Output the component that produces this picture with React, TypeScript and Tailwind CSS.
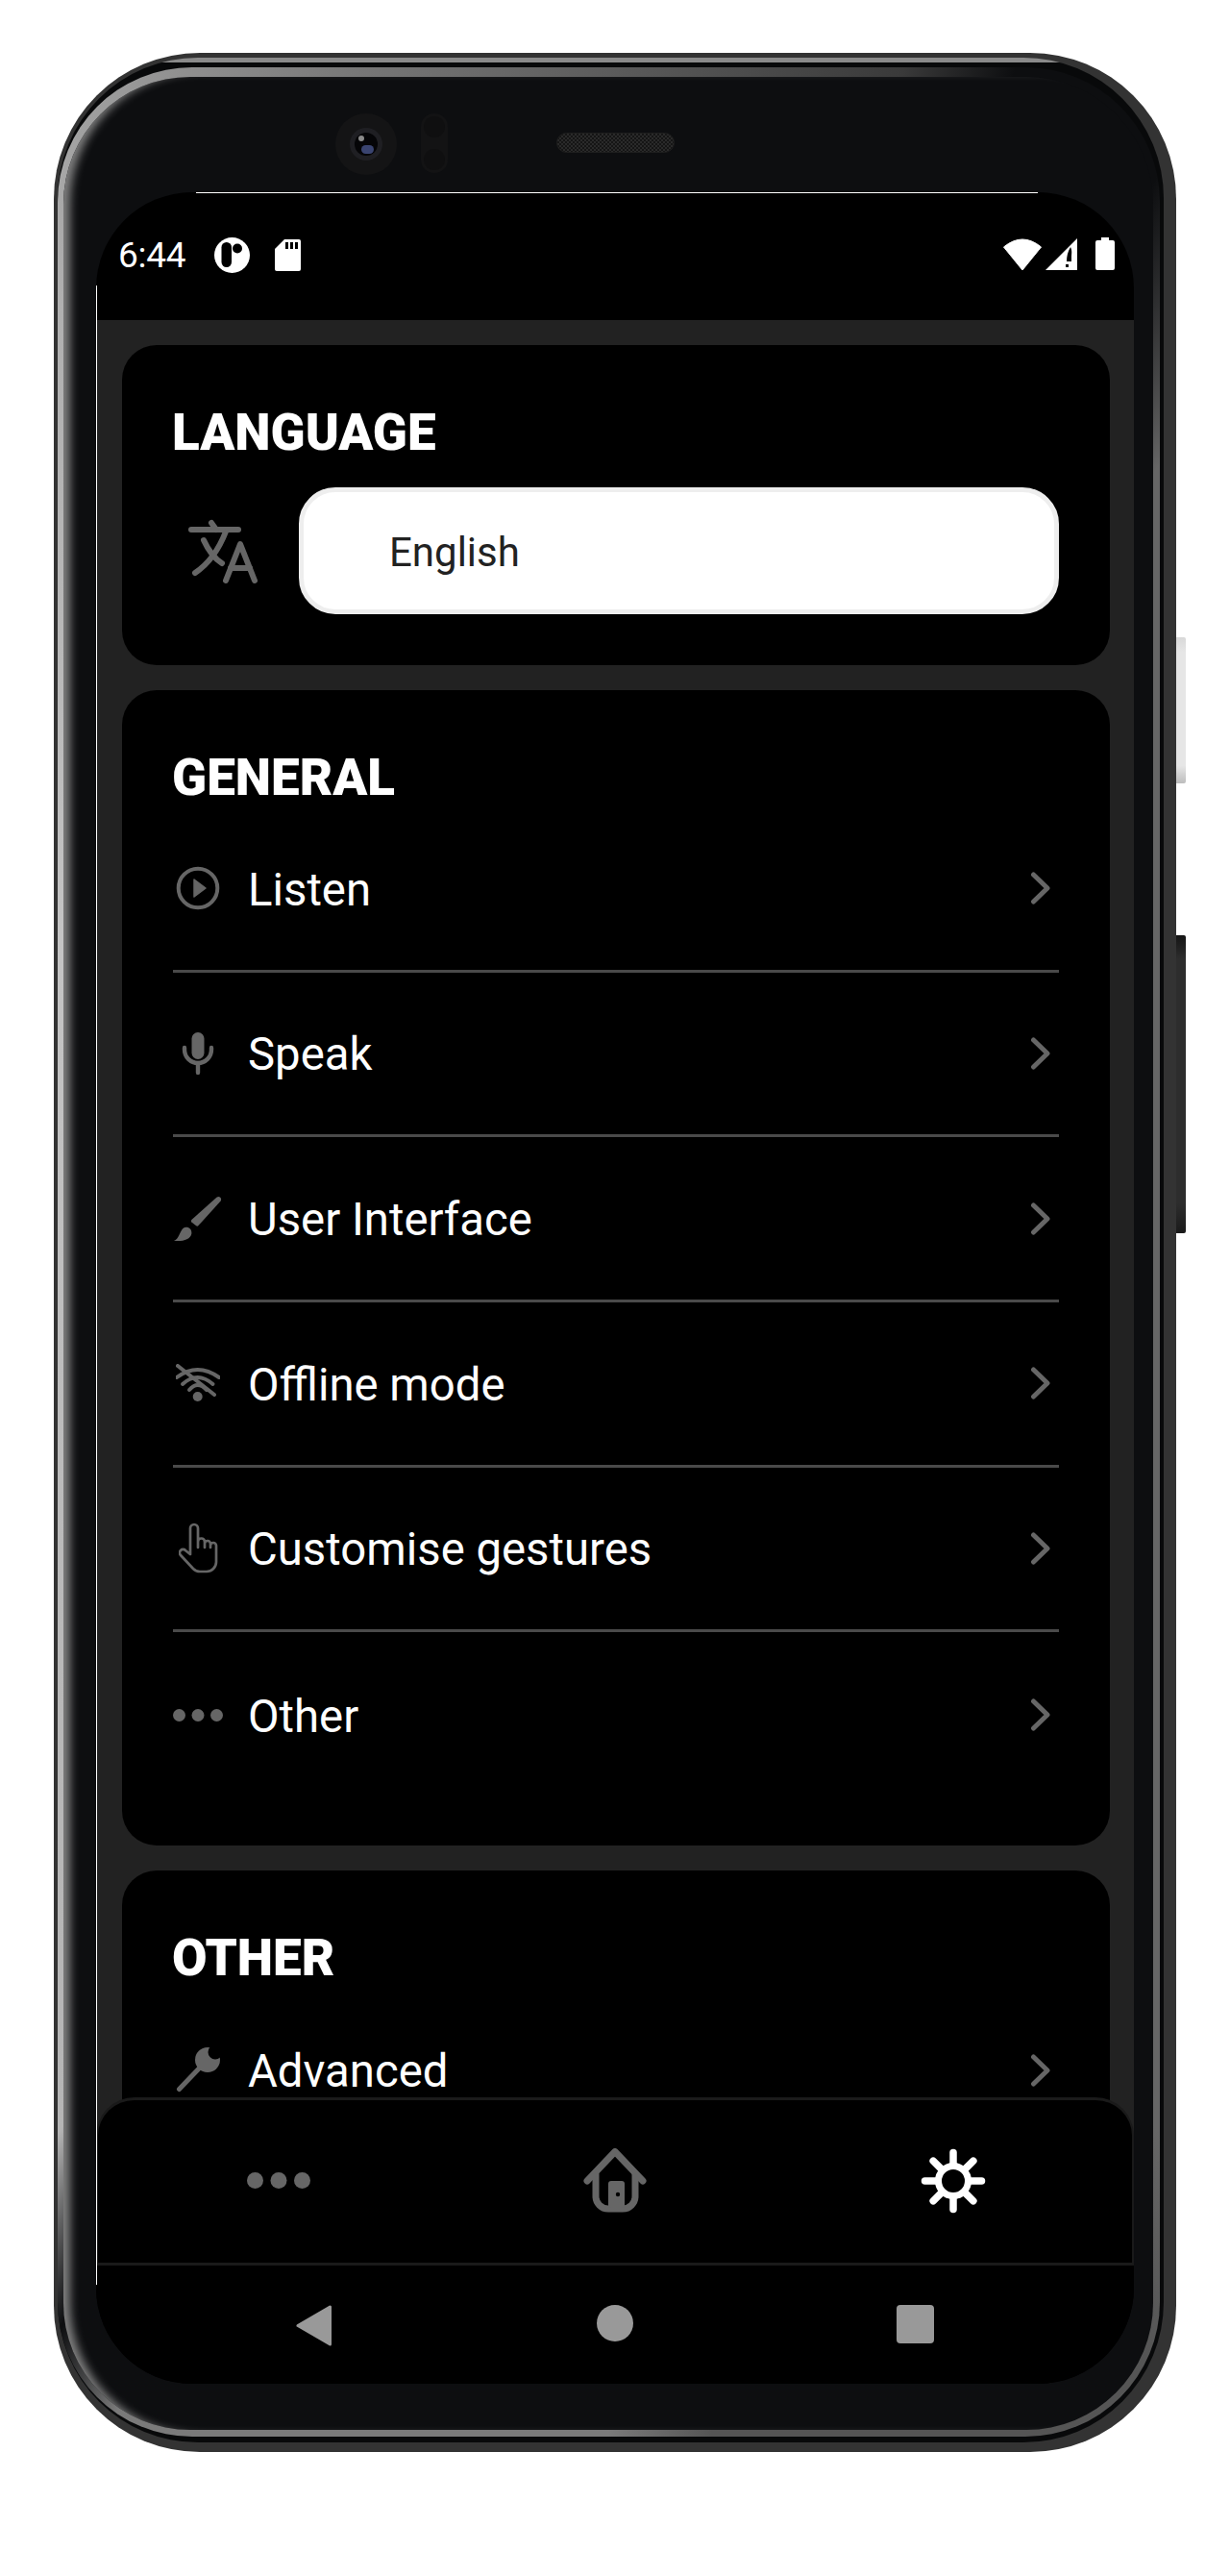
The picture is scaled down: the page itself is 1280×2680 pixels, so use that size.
import React from "react";
import { ReactNode } from "react";

const G = "#666";

function PlayIcon() {
  return (
    <svg width="46" height="46" viewBox="0 0 46 46">
      <circle cx="23" cy="23" r="20.3" fill="none" stroke={G} strokeWidth="4" />
      <path d="M19 14 L31 23 L19 32 Z" fill={G} stroke={G} strokeWidth="1.5" strokeLinejoin="round" />
    </svg>
  );
}
function MicIcon() {
  return (
    <svg width="34" height="46" viewBox="0 0 34 46">
      <rect x="10.5" y="1" width="13" height="28" rx="6.5" fill={G} />
      <path d="M3 17 v2 a14 14 0 0 0 28 0 v-2" fill="none" stroke={G} strokeWidth="4.4" strokeLinecap="round" />
      <path d="M17 33 V43" fill="none" stroke={G} strokeWidth="4.4" strokeLinecap="round" />
    </svg>
  );
}
function BrushIcon() {
  return (
    <svg width="55" height="52" viewBox="9 10 55 52">
      <path d="M57 12.5 L29.5 37 Q28.5 38.5 29.5 39.8 L34.5 43.8 Q36 44.6 37 43.5 L61.5 16.5 Q62.8 14 60.8 12.2 Q59 11 57 12.5 Z" fill={G} />
      <path d="M10 60 C15.5 58.5 16.5 50 20 46.5 C24 43.5 30 46 29.5 52 C28.5 59 18 61.5 10 60 Z" fill={G} />
    </svg>
  );
}
function WifiOffIcon() {
  return (
    <svg width="46" height="40" viewBox="0 0 46 40" fill="none" stroke={G} strokeLinecap="round">
      <g strokeWidth="4">
        <path d="M1 14 Q22.5 -2 45 14" />
        <path d="M7 21 Q22.5 7 38.5 21" />
        <path d="M14 27 Q22.5 17 32 27" />
        <path d="M2 2 L40 32" />
      </g>
      <circle cx="22.7" cy="34" r="5" fill={G} stroke="none" />
    </svg>
  );
}
function HandIcon() {
  return (
    <svg width="41" height="54" viewBox="36 184 41 54" fill="none" stroke={G} strokeWidth="2.7" strokeLinecap="round" strokeLinejoin="round">
      <path d="M48 217 V190 a4 4 0 0 1 8 0 V210 M56 204 a3.5 3.5 0 0 1 7 0 V210 M63 206 a3 3 0 0 1 6 0 V210 M69 208 a3 3 0 0 1 6 0 V225 a10 10 0 0 1 -10 10 H58 c-3 0 -5 -1 -7 -3 L38 218 a3.5 3.5 0 0 1 5 -5 L48 217" />
    </svg>
  );
}
function DotsIcon({ w, r }: { w: number; r: number }) {
  return (
    <svg width={w} height={r * 2} viewBox={`0 0 ${w} ${r * 2}`}>
      <circle cx={r} cy={r} r={r} fill={G} />
      <circle cx={w / 2} cy={r} r={r} fill={G} />
      <circle cx={w - r} cy={r} r={r} fill={G} />
    </svg>
  );
}
function WrenchIcon() {
  return (
    <svg width="46" height="47" viewBox="0 0 46 47">
      <path d="M3.5 43.5 L26 20" stroke={G} strokeWidth="5" strokeLinecap="round" fill="none" />
      <circle cx="33" cy="13" r="13" fill={G} />
      <circle cx="41" cy="5" r="7.5" fill="#000" />
    </svg>
  );
}
function Chevron() {
  return (
    <svg width="22" height="34" viewBox="0 0 22 34" fill="none" stroke={G} strokeWidth="5" strokeLinecap="round" strokeLinejoin="round">
      <path d="M3.5 3 L18 17 L3.5 31" />
    </svg>
  );
}
function TranslateIcon() {
  return (
    <svg width="85" height="75" viewBox="190 535 85 75" fill="none" stroke={G} strokeWidth="6" strokeLinecap="round" strokeLinejoin="round">
      <path d="M199 550 H248" />
      <path d="M220 543 L225 550" />
      <path d="M235 552 C228 570 218 585 203 595" />
      <path d="M212 561 C217 572 223 580 231 585" />
      <path d="M235 603 L250 565 L265 603" />
      <path d="M240 590 H260" />
    </svg>
  );
}
function HomeIcon() {
  return (
    <svg width="68" height="68" viewBox="16 14 68 68" fill="none" stroke={G} strokeLinecap="round" strokeLinejoin="round">
      <path d="M21 48 L50 17.5 L79 48" strokeWidth="7" />
      <path d="M30 41 V64 a13 13 0 0 0 13 13 H58 a13 13 0 0 0 13 -13 V41" strokeWidth="7" />
      <rect x="43" y="48" width="17" height="28" rx="3" fill={G} stroke="none" />
      <circle cx="53" cy="62" r="2.2" fill="#000" stroke="none" />
    </svg>
  );
}
function GearIcon() {
  const spokes = [0, 45, 90, 135, 180, 225, 270, 315];
  return (
    <svg width="68" height="68" viewBox="-34 -34 68 68" fill="none" stroke="#fff" strokeLinecap="round">
      <circle r="15.5" strokeWidth="7" />
      {spokes.map((a) => (
        <path key={a} d="M0 -18 V-29.5" strokeWidth="7.5" transform={`rotate(${a})`} />
      ))}
    </svg>
  );
}

function Row({ icon, label, last }: { icon: ReactNode; label: string; last?: boolean }) {
  return (
    <div className={`flex h-[171.7px] items-center ${last ? "" : "border-b-[3px] border-[#4a4a4a]"}`}>
      <div className="flex w-[52px] items-center justify-center">{icon}</div>
      <span className="ml-[26px] flex-1 pt-[4px] text-[47.3px] leading-none text-white">{label}</span>
      <div className="mr-[8px]">
        <Chevron />
      </div>
    </div>
  );
}

function Title({ children }: { children: ReactNode }) {
  return (
    <h2 className="-ml-[1px] flex h-[63px] items-center pt-[1px] text-[53px] leading-none font-black text-white">
      {children}
    </h2>
  );
}

export default function App() {
  return (
    <div className="relative h-[2680px] w-[1280px] bg-white pt-[55px] pl-[56px] font-['Roboto',sans-serif]">
      {/* side buttons */}
      <div className="absolute top-[663px] left-[1224px] h-[152px] w-[10px] rounded-r-[2px] bg-[linear-gradient(#d8d8d8,#e6e6e6_10%,#e6e6e6_88%,#bdbdbd)]" />
      <div className="absolute top-[973px] left-[1224px] h-[310px] w-[10px] rounded-r-[2px] bg-[linear-gradient(#151515,#2d2d2d_8%,#2d2d2d_90%,#1a1a1a)]" />

      {/* phone body */}
      <div className="h-[2496px] w-[1168px] rounded-[152px] bg-[#333333] pt-[5px] pr-[13px] pb-[10px] pl-[4px]">
        <div className="h-full rounded-[146px] bg-[linear-gradient(#8a8a8a_0,#8a8a8a_5px,#08090a_5px)] pt-[10px] pr-[4px] pb-[6px]">
          <div className="h-full rounded-[140px] bg-[conic-gradient(#5c5c5c_0deg,#3a3a3a_14deg,#0d0e10_19deg,#0d0e10_27deg,#666_35deg,#666_148deg,#555_154deg,#555_175deg,#7a7a7a_180deg,#7a7a7a_203deg,#0d0e10_207deg,#b5b5b5_212deg,#c4c4c4_300deg,#b0b0b0_330deg,#777_348deg,#5c5c5c_360deg)] pt-[10px] pr-[7px] pb-[7px] pl-[6px]">
            <div className="flex h-full flex-col rounded-[132px] bg-[#0d0e10] pr-[20px] pb-[48px] pl-[34px] shadow-[inset_13px_0_10px_-6px_#808080]">
              {/* earpiece row */}
              <div className="flex h-[120px] shrink-0 items-start pt-[38px] pl-[249px]">
                <div className="flex h-[64px] w-[64px] items-center justify-center rounded-full bg-[#141415]">
                  <div className="flex h-[34px] w-[34px] items-center justify-center rounded-full bg-[#1f1f23]">
                    <div className="relative h-[24px] w-[24px] rounded-full bg-[#050507]">
                      <div className="absolute top-[3px] left-[4px] h-[6px] w-[6px] rounded-full bg-[#8a8a8a]" />
                      <div className="absolute top-[13px] left-[7px] h-[9px] w-[13px] rounded-full bg-[#3a4470]" />
                    </div>
                  </div>
                </div>
                <div className="ml-[25px] flex h-[62px] w-[28px] flex-col items-center justify-between rounded-full bg-[#131314] py-[3px]">
                  <div className="h-[22px] w-[22px] rounded-full bg-[#0f0f10]" />
                  <div className="h-[22px] w-[22px] rounded-full bg-[#0f0f10]" />
                </div>
                <div className="mt-[20px] ml-[113px] h-[21px] w-[123px] rounded-full border border-[#1e1e1e] bg-[#1a1a1a] bg-[repeating-conic-gradient(#2a2a2a_0_25%,#151515_0_50%)] bg-[length:4px_4px]" />
              </div>

              {/* screen */}
              <div className="relative flex flex-1 flex-col overflow-hidden rounded-[100px] bg-black">
                {/* thin white edges */}
                <div className="absolute top-0 left-[104px] z-10 h-px w-[876px] bg-white" />
                <div className="absolute top-[97px] left-0 z-10 h-[2080px] w-px bg-white" />

                {/* status bar */}
                <div className="flex h-[133px] shrink-0 items-start justify-between pt-[47px] pr-[20px] pl-[23px]">
                  <div className="flex items-center">
                    <span className="w-[70px] text-[37px] leading-[37px] tracking-[-0.3px] text-white">6:44</span>
                    <svg className="ml-[30px]" width="37" height="37" viewBox="0 0 37 37">
                      <circle cx="18.5" cy="18.5" r="18.5" fill="#fff" />
                      <rect x="7.5" y="5" width="10.5" height="26" rx="5.2" fill="#000" />
                      <circle cx="24" cy="11.5" r="5" fill="#000" />
                    </svg>
                    <svg className="ml-[26px]" width="27" height="33" viewBox="0 0 27 33">
                      <path d="M10 0 H25 a2 2 0 0 1 2 2 V31 a2 2 0 0 1 -2 2 H2 a2 2 0 0 1 -2 -2 V10 Z" fill="#fff" />
                      <path d="M11 3 h3 v7 h-3 Z M16 3 h3 v7 h-3 Z M21 3 h3 v7 h-3 Z" fill="#000" />
                    </svg>
                  </div>
                  <div className="flex items-center">
                    <svg width="40" height="34" viewBox="0 0 40 34">
                      <path d="M0.5 9 Q20 -7 39.5 9 L20 33 Z" fill="#fff" stroke="#fff" strokeWidth="1" strokeLinejoin="round" />
                    </svg>
                    <svg className="ml-[4px]" width="33" height="34" viewBox="0 0 33 34">
                      <path d="M33 0 V33 H0 Z" fill="#fff" />
                      <path d="M26 9 C28 13 27 16 27 20 L27 24 L22 24 C22 19 23 14 26 9 Z M21 27 h3 v3 h-3 Z" fill="#000" />
                    </svg>
                    <svg className="ml-[19px]" width="20" height="35" viewBox="0 0 20 35">
                      <path d="M6 0 H14 V3 H18 a2 2 0 0 1 2 2 V32 a2 2 0 0 1 -2 2 H2 a2 2 0 0 1 -2 -2 V5 a2 2 0 0 1 2 -2 H6 Z" fill="#fff" />
                    </svg>
                  </div>
                </div>

                {/* scrolling content */}
                <div className="relative flex-1 overflow-hidden bg-[#222222] pt-[26px] pr-[25px] pl-[27px]">
                  <div className="flex flex-col gap-[26px]">
                    <section className="h-[333px] rounded-[36px] bg-black px-[53px] pt-[59px]">
                      <Title>LANGUAGE</Title>
                      <div className="mt-[26px] flex items-center">
                        <div className="ml-[10px] flex w-[85px] justify-center">
                          <TranslateIcon />
                        </div>
                        <div className="ml-[36px] flex h-[132px] flex-1 items-center rounded-[38px] border-[5px] border-[#eeeeee] bg-white pt-[2px] pl-[89px] text-[42px] text-[#222222]">
                          English
                        </div>
                      </div>
                    </section>

                    <section className="h-[1202px] rounded-[36px] bg-black px-[53px] pt-[59px]">
                      <Title>GENERAL</Title>
                      <Row icon={<PlayIcon />} label="Listen" />
                      <Row icon={<MicIcon />} label="Speak" />
                      <Row icon={<BrushIcon />} label="User Interface" />
                      <Row icon={<WifiOffIcon />} label="Offline mode" />
                      <Row icon={<HandIcon />} label="Customise gestures" />
                      <Row icon={<DotsIcon w={52} r={6.5} />} label="Other" last />
                    </section>

                    <section className="h-[400px] rounded-[36px] bg-black px-[53px] pt-[59px]">
                      <Title>OTHER</Title>
                      <Row icon={<WrenchIcon />} label="Advanced" last />
                    </section>
                  </div>

                  {/* tab bar lies over the scrolling list */}
                  <div className="absolute right-0 bottom-0 left-0 flex h-[172px] items-center justify-center rounded-t-[40px] border-x-[2px] border-t-[3px] border-[#1a1a1a] bg-black pb-[2px]">
                    <div className="flex w-[350px] justify-center">
                      <DotsIcon w={66} r={8.5} />
                    </div>
                    <div className="flex w-[350px] justify-center">
                      <HomeIcon />
                    </div>
                    <div className="flex w-[350px] justify-center pl-[4px]">
                      <GearIcon />
                    </div>
                  </div>
                </div>

                {/* android nav */}
                <div className="flex h-[126px] shrink-0 items-start border-t-[3px] border-[#1a1a1a] bg-black pt-[41px] pl-[208px]">
                  <svg width="38" height="43" viewBox="0 0 38 43">
                    <path d="M35.5 2 V41 L2 21.5 Z" fill="#999" stroke="#999" strokeWidth="3" strokeLinejoin="round" />
                  </svg>
                  <div className="ml-[275px] h-[38px] w-[38px] rounded-full bg-[#999]" />
                  <div className="ml-[274px] h-[40px] w-[39px] rounded-[4px] bg-[#999]" />
                </div>
              </div>
            </div>
          </div>
        </div>
      </div>
    </div>
  );
}
